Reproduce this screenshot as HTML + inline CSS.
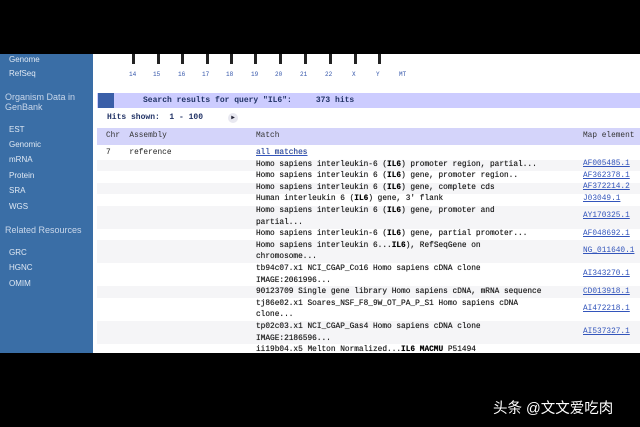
<!DOCTYPE html>
<html><head><meta charset="utf-8"><style>
*{margin:0;padding:0}
body{width:640px;height:427px;background:#000;position:relative;overflow:hidden;font-family:"Liberation Mono",monospace}
#pg{position:absolute;left:0;top:54px;width:640px;height:299px;background:#fff;overflow:hidden}
#sb{position:absolute;left:0;top:0;width:93px;height:299px;background:#3a6ea6}
.s{position:absolute;color:#dfe8f3;font-family:"Liberation Sans",sans-serif;font-size:8px;left:9px;white-space:nowrap}
.h{left:5px;font-size:9px;color:#c9d7ea}
.t{position:absolute;top:0;width:3px;height:10px;background:#222}
.n{position:absolute;top:17px;font-size:6px;color:#3355aa}
.bar{position:absolute;left:97px;right:0;background:#ccccff}
.ab{position:absolute;white-space:pre;font-size:7.8px;color:#222}
.ln{position:absolute;left:256px;white-space:pre;font-size:7.8px;color:#222;line-height:11.6px;text-shadow:0 0 0.4px #222}
.mp{position:absolute;left:583px;font-size:7.8px;color:#3355bb;text-decoration:underline;white-space:pre}
.r{position:absolute;left:97px;right:0;background:#f5f5f7}
b{color:#000}
</style></head><body>
<div id="pg">
<div id="sb">
<div class="s" style="top:1px">Genome</div>
<div class="s" style="top:15px">RefSeq</div>
<div class="s h" style="top:38px;line-height:10px">Organism Data in<br>GenBank</div>
<div class="s" style="top:71px">EST</div>
<div class="s" style="top:86px">Genomic</div>
<div class="s" style="top:101px">mRNA</div>
<div class="s" style="top:117px">Protein</div>
<div class="s" style="top:132px">SRA</div>
<div class="s" style="top:148px">WGS</div>
<div class="s h" style="top:171px">Related Resources</div>
<div class="s" style="top:194px">GRC</div>
<div class="s" style="top:209px">HGNC</div>
<div class="s" style="top:225px">OMIM</div>
</div>
<div class="t" style="left:132px"></div><div class="t" style="left:157px"></div><div class="t" style="left:181px"></div><div class="t" style="left:206px"></div><div class="t" style="left:230px"></div><div class="t" style="left:254px"></div><div class="t" style="left:279px"></div><div class="t" style="left:304px"></div><div class="t" style="left:329px"></div><div class="t" style="left:354px"></div><div class="t" style="left:378px"></div>
<div class="n" style="left:129px">14</div><div class="n" style="left:153px">15</div><div class="n" style="left:178px">16</div><div class="n" style="left:202px">17</div><div class="n" style="left:226px">18</div><div class="n" style="left:251px">19</div><div class="n" style="left:275px">20</div><div class="n" style="left:300px">21</div><div class="n" style="left:325px">22</div><div class="n" style="left:352px">X</div><div class="n" style="left:376px">Y</div><div class="n" style="left:399px">MT</div>
<div class="bar" style="top:39px;height:15px"></div>
<div style="position:absolute;left:98px;top:39px;width:16px;height:15px;background:#3a5fa8"></div>
<div class="ab" style="left:143px;top:42px;font-weight:bold;color:#223366;font-size:8px">Search results for query "IL6":     373 hits</div>
<div class="ab" style="left:107px;top:59px;font-weight:bold;color:#223366;font-size:8px">Hits shown:  1 - 100</div>
<div style="position:absolute;left:228px;top:59px;width:10px;height:10px;border-radius:50%;background:#e8e8f0;color:#223;font-size:6px;text-align:center;line-height:10px">▶</div>
<div class="bar" style="top:74px;height:17px;background:#d4d4fa"></div>
<div class="ab" style="left:106px;top:78px;color:#333">Chr  Assembly</div>
<div class="ab" style="left:256px;top:78px;color:#333">Match</div>
<div class="ab" style="left:583px;top:78px;color:#333">Map element</div>
<div class="r" style="top:106px;height:11px"></div>
<div class="r" style="top:129px;height:11px"></div>
<div class="r" style="top:152px;height:23px"></div>
<div class="r" style="top:186px;height:23px"></div>
<div class="r" style="top:232px;height:12px"></div>
<div class="r" style="top:267px;height:23px"></div>
<div class="ab" style="left:106px;top:95px">7    reference</div>
<div class="ln" style="top:94px"><span style="color:#3355bb;text-decoration:underline">all matches</span>
Homo sapiens interleukin-6 (<b>IL6</b>) promoter region, partial...
Homo sapiens interleukin 6 (<b>IL6</b>) gene, promoter region..
Homo sapiens interleukin 6 (<b>IL6</b>) gene, complete cds
Human interleukin 6 (<b>IL6</b>) gene, 3' flank
Homo sapiens interleukin 6 (<b>IL6</b>) gene, promoter and
partial...
Homo sapiens interleukin-6 (<b>IL6</b>) gene, partial promoter...
Homo sapiens interleukin 6...<b>IL6</b>), RefSeqGene on
chromosome...
tb94c07.x1 NCI_CGAP_Co16 Homo sapiens cDNA clone
IMAGE:2061996...
90123709 Single gene library Homo sapiens cDNA, mRNA sequence
tj86e02.x1 Soares_NSF_F8_9W_OT_PA_P_S1 Homo sapiens cDNA
clone...
tp02c03.x1 NCI_CGAP_Gas4 Homo sapiens cDNA clone
IMAGE:2186596...
ii19b04.x5 Melton Normalized...<b>IL6 MACMU</b> P51494</div>
<div class="mp" style="top:106px">AF005485.1</div>
<div class="mp" style="top:118px">AF362378.1</div>
<div class="mp" style="top:129px">AF372214.2</div>
<div class="mp" style="top:141px">J03049.1</div>
<div class="mp" style="top:158px">AY170325.1</div>
<div class="mp" style="top:176px">AF048692.1</div>
<div class="mp" style="top:193px">NG_011640.1</div>
<div class="mp" style="top:216px">AI343270.1</div>
<div class="mp" style="top:234px">CD013918.1</div>
<div class="mp" style="top:251px">AI472218.1</div>
<div class="mp" style="top:274px">AI537327.1</div>
</div>
<div style="position:absolute;left:493px;top:397px;color:#fff;font-family:'Liberation Sans','Noto Sans CJK SC',sans-serif;font-size:14.5px;white-space:nowrap">头条 @文文爱吃肉</div>
</body></html>
